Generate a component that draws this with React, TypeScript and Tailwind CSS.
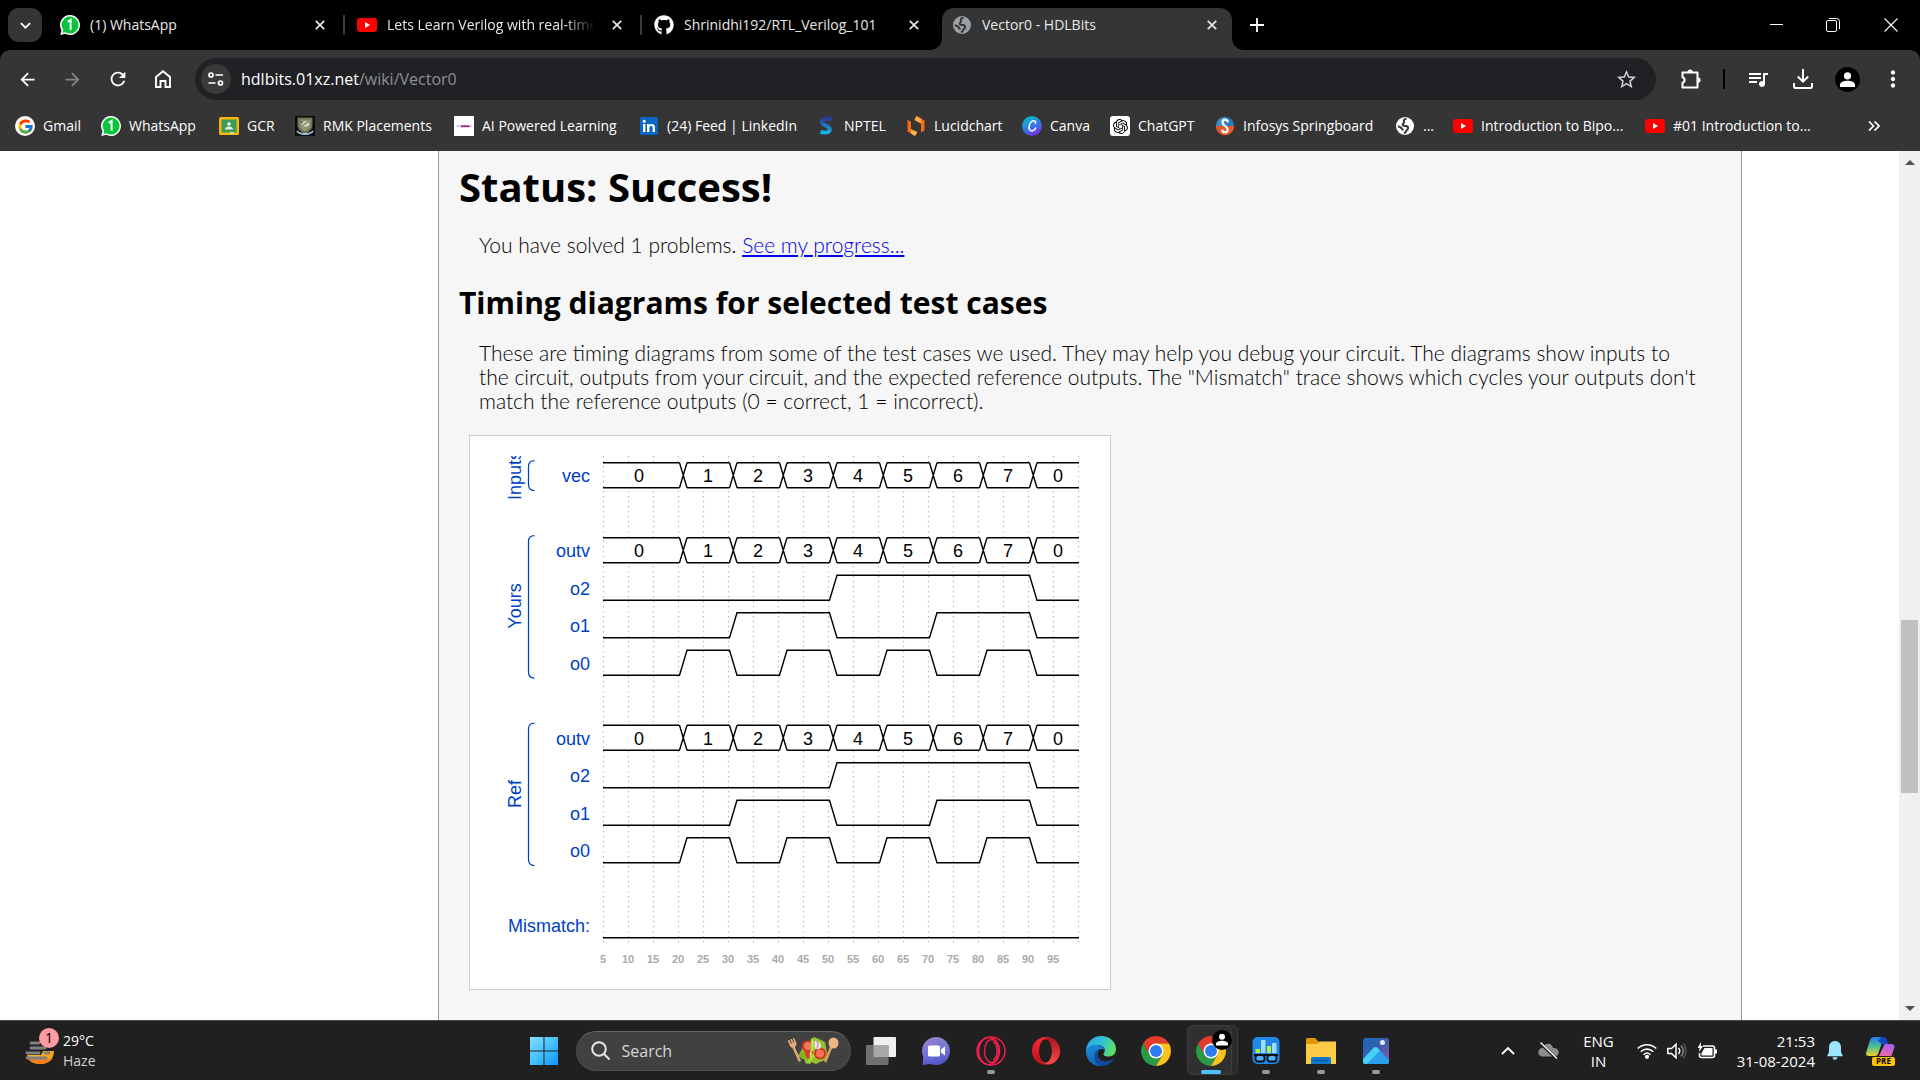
import type { ReactNode } from "react";
import { FcGoogle } from "react-icons/fc";
import { FaGithub } from "react-icons/fa";
import { SiOpenai } from "react-icons/si";
import { MdArrowBack, MdArrowForward, MdRefresh, MdStarBorder, MdQueueMusic, MdMoreVert } from "react-icons/md";

/* ---------- small logos ---------- */

function WhatsAppIcon() {
  return (
    <svg viewBox="0 0 20 20" className="size-5 shrink-0" aria-hidden="true">
      <path d="M10 0a10 10 0 1 1-4.800 18.800L.3 20l1.200-4.800A10 10 0 0 1 10 0z" fill="#fff" />
      <path d="M10 1.500a8.500 8.500 0 1 1-4.500 15.700l-3 .8.8-3A8.500 8.500 0 0 1 10 1.500z" fill="#09c43c" />
      <path d="M7.800 6.900 10.600 5v9.800" fill="none" stroke="#fff" strokeWidth="2" />
    </svg>
  );
}

function YouTubeIcon() {
  return (
    <svg viewBox="0 0 20 20" className="size-5 shrink-0" aria-hidden="true">
      <rect y="3" width="20" height="14" rx="3" fill="#f00" />
      <path d="M8 7v6l5-3z" fill="#fff" />
    </svg>
  );
}

function GlobeIcon({ tone }: { tone: string }) {
  return (
    <svg viewBox="0 0 20 20" className="size-5 shrink-0" aria-hidden="true">
      <circle cx="10" cy="10" r="9" fill={tone} />
      <path
        d="M11.500 2.800C9 3.200 8.300 4.600 9 6c.5 1-1.300 1.200-1.300 2.500 0 1.500 1.800 1.300 3.300 1.500 2 .3 2.500 1.500 1.800 3-.5 1-1.500 1-1.800 2.300-.2 1-.8 1.700-2 2M2.800 10.500c1.200-.3 2.200.2 3.200 1.200.9.9 2 1.300 1.700 3"
        fill="none"
        stroke="#353535"
        strokeWidth="2"
      />
    </svg>
  );
}

function ClassroomIcon() {
  return (
    <svg viewBox="0 0 20 20" className="size-5 shrink-0" aria-hidden="true">
      <rect y="1" width="20" height="18" rx="1.500" fill="#f4b60a" />
      <rect x="2.500" y="3.500" width="15" height="13" fill="#3f9a54" />
      <circle cx="10" cy="8" r="1.800" fill="#fff" />
      <path d="M6 13.500c0-2 1.700-3 4-3s4 1 4 3z" fill="#dcefe0" />
      <path d="M11 16.500h4v1.200h-4z" fill="#fff" />
    </svg>
  );
}

function CrestIcon() {
  return (
    <svg viewBox="0 0 20 20" className="size-5 shrink-0" aria-hidden="true">
      <rect width="20" height="20" fill="#0b0b0b" />
      <path d="M2.500 1.500h15v8c0 4-4 6.500-7.500 8.500-3.500-2-7.500-4.500-7.500-8.500z" fill="#6f7351" />
      <path d="M4.500 3.500h11v6c0 2.700-3 4.500-5.500 6-2.500-1.500-5.500-3.300-5.500-6z" fill="#8f9170" />
      <ellipse cx="10.500" cy="8" rx="3.800" ry="2.800" fill="#d6d6c4" />
      <path d="M7.500 9.500 13 6M5 5l3 2" stroke="#4c5148" />
      <path d="M2 15c3 4 13 4 16 0" stroke="#9cc4dd" strokeWidth="1.800" fill="none" />
    </svg>
  );
}

function PageTileIcon() {
  return (
    <svg viewBox="0 0 20 20" className="size-5 shrink-0" aria-hidden="true">
      <rect width="20" height="20" fill="#fff" />
      <path d="M2.500 10h4" stroke="#b9a6c4" strokeWidth="1.200" />
      <path d="M7 10.300h8.500" stroke="#a3207b" strokeWidth="1.600" />
      <path d="M8 9v2.500M11 9v2.200M14 9v2.200M17 9l-.5 1.500" stroke="#7b2a7d" strokeWidth=".8" />
    </svg>
  );
}

function LinkedInIcon() {
  return (
    <svg viewBox="0 0 20 20" className="size-5 shrink-0" aria-hidden="true">
      <rect x="1" y="1" width="18" height="18" rx="1.500" fill="#0a66c2" />
      <path d="M4 8h2.400v8H4zM8 8h2.300v1.200C11.600 7.200 16 7.300 16 11.300V16h-2.400v-4.300c0-2.400-3.200-2.200-3.200 0V16H8z" fill="#fff" />
      <circle cx="5.200" cy="5.200" r="1.500" fill="#fff" />
    </svg>
  );
}

function SwayamIcon() {
  return (
    <svg viewBox="0 0 20 20" className="size-5 shrink-0" aria-hidden="true">
      <defs>
        <linearGradient id="swayam" x1="0" y1="0" x2="0" y2="1">
          <stop offset="0" stopColor="#2d3a98" />
          <stop offset="1" stopColor="#12b5ec" />
        </linearGradient>
      </defs>
      <path d="M15.500 3.500C12 1.800 6.500 2.500 6 6c-.4 3.300 8 3.500 7.700 7.500-.3 3-5 4-9.200 2.200" fill="none" stroke="url(#swayam)" strokeWidth="4" />
    </svg>
  );
}

function LucidIcon() {
  return (
    <svg viewBox="0 0 20 20" className="size-5 shrink-0" aria-hidden="true">
      <path d="M1.500 4 5 5.800v7.400l6 3.300L9 20l-7.500-4.500z" fill="#f96b13" />
      <path d="M5 13.200 11.500 16 9 20l-4-2.500z" fill="#ffb04a" />
      <path d="m10.500 0 8 4.500v10L15 16.500v-9L8.500 4z" fill="#f96b13" />
      <path d="m10.500 0 4.500 2.600v4.900L8.500 4z" fill="#ffa940" />
    </svg>
  );
}

function CanvaIcon() {
  return (
    <svg viewBox="0 0 20 20" className="size-5 shrink-0" aria-hidden="true">
      <defs>
        <linearGradient id="canva" x1=".2" y1="0" x2=".7" y2="1">
          <stop offset="0" stopColor="#00c4cc" />
          <stop offset=".5" stopColor="#2f7fe0" />
          <stop offset="1" stopColor="#7d2ae8" />
        </linearGradient>
      </defs>
      <circle cx="10" cy="10" r="10" fill="url(#canva)" />
      <path d="M13.300 7.500C14.300 4.600 11.500 4 9.500 5.500c-2.800 2.200-3.700 8.500-.4 9.300 1.800.4 3.600-.9 4.600-2.800" fill="none" stroke="#fff" strokeWidth="1.500" strokeLinecap="round" />
    </svg>
  );
}

function ChatGptIcon() {
  return (
    <span className="flex size-5 shrink-0 items-center justify-center rounded-[3px] bg-white text-black">
      <SiOpenai size={15} />
    </span>
  );
}

function InfosysIcon() {
  return (
    <svg viewBox="0 0 20 20" className="size-5 shrink-0" aria-hidden="true">
      <path d="M10 .8A9.200 9.200 0 0 0 .8 10H10z" fill="#3b8fd0" />
      <path d="M10 .8A9.200 9.200 0 0 1 19.200 10H10z" fill="#2a7cc0" />
      <path d="M.8 10A9.200 9.200 0 0 0 10 19.200V10z" fill="#e4572e" />
      <path d="M19.200 10A9.200 9.200 0 0 1 10 19.200V10z" fill="#f0592b" />
      <path d="M12.800 6.500c0-4-5.300-3.500-5.300-.3 0 3.800 5.300 3.500 5.300 7.500 0 3.300-5.500 3.500-5.500-.3" fill="none" stroke="#fff" strokeWidth="2.200" />
    </svg>
  );
}

function ChromeLogo() {
  return (
    <svg viewBox="2 2 44 44" className="size-[30px]" aria-hidden="true">
      <path d="M24 13H43.050A22 22 0 0 0 4.950 13L14.470 29.500 24 24z" fill="#e33b2e" />
      <path d="M14.470 29.500 4.950 13A22 22 0 0 0 24 46L33.530 29.500 24 24z" fill="#2a9a48" />
      <path d="M33.530 29.500 24 46A22 22 0 0 0 43.050 13H24v11z" fill="#fcc21b" />
      <circle cx="24" cy="24" r="11" fill="#fff" />
      <circle cx="24" cy="24" r="8.800" fill="#2f7cf0" />
    </svg>
  );
}

/* ---------- browser chrome ---------- */

function CloseGlyph() {
  return (
    <svg viewBox="0 0 10 10" className="size-[10px]" aria-hidden="true">
      <path d="M.8.8l8.400 8.400M9.200.8.800 9.200" stroke="#e8e8e8" strokeWidth="1.700" />
    </svg>
  );
}

function Tab({ icon, title, active = false, fade = false }: { icon: ReactNode; title: string; active?: boolean; fade?: boolean }) {
  const shape = active
    ? "relative mx-[5px] mt-2 flex w-[290px] items-center rounded-t-xl bg-[#353535] pl-[10px] pr-[10px] pb-2"
    : "flex w-[297px] items-center border-l border-transparent pl-[13px] pr-[13px]";
  return (
    <div role="tab" aria-selected={active} className={shape}>
      {active && (
        <>
          <svg viewBox="0 0 12 12" className="absolute bottom-0 -left-3 size-3" aria-hidden="true">
            <path d="M12 0v12H0A12 12 0 0 0 12 0z" fill="#353535" />
          </svg>
          <svg viewBox="0 0 12 12" className="absolute -right-3 bottom-0 size-3" aria-hidden="true">
            <path d="M0 0v12h12A12 12 0 0 1 0 0z" fill="#353535" />
          </svg>
        </>
      )}
      {icon}
      <span
        className={
          fade
            ? "ml-[10px] min-w-0 flex-1 overflow-hidden whitespace-nowrap mask-r-from-85% mr-3"
            : "ml-[10px] min-w-0 flex-1 overflow-hidden whitespace-nowrap"
        }
      >
        {title}
      </span>
      <button type="button" aria-label={"Close " + title} className="flex size-5 items-center justify-center">
        <CloseGlyph />
      </button>
    </div>
  );
}

function TabStrip() {
  return (
    <header className="flex h-[50px] shrink-0 bg-black text-sm text-[#e8e8e8]">
      <button type="button" aria-label="Search tabs" className="my-2 ml-2 flex h-[34px] w-[34px] items-center justify-center rounded-[11px] bg-[#353535]">
        <svg viewBox="0 0 10 6" className="h-[7px] w-[11px]" aria-hidden="true">
          <path d="M.8.8 5 5l4.200-4.200" fill="none" stroke="#fff" strokeWidth="1.700" />
        </svg>
      </button>
      <div role="tablist" className="ml-1 flex">
        <Tab icon={<WhatsAppIcon />} title="(1) WhatsApp" />
        <div className="flex">
          <span className="-mr-[2px] my-auto h-5 w-[2px] bg-[#3c3c3c]" />
          <Tab icon={<YouTubeIcon />} title="Lets Learn Verilog with real-time Practice" fade />
        </div>
        <div className="flex">
          <span className="-mr-[2px] my-auto h-5 w-[2px] bg-[#3c3c3c]" />
          <Tab icon={<FaGithub size={20} className="shrink-0 text-white" />} title="Shrinidhi192/RTL_Verilog_101" />
        </div>
        <Tab icon={<GlobeIcon tone="#9aa0a6" />} title="Vector0 - HDLBits" active />
      </div>
      <button type="button" aria-label="New tab" className="ml-[6px] flex w-7 items-center justify-center">
        <svg viewBox="0 0 14 14" className="size-[14px]" aria-hidden="true">
          <path d="M7 0v14M0 7h14" stroke="#fff" strokeWidth="1.800" />
        </svg>
      </button>
      <div className="ml-auto flex">
        <button type="button" aria-label="Minimize" className="flex w-14 items-center justify-center">
          <svg viewBox="0 0 14 14" className="size-[14px]" aria-hidden="true">
            <path d="M0 6.500h13" stroke="#fff" />
          </svg>
        </button>
        <button type="button" aria-label="Restore" className="flex w-14 items-center justify-center">
          <svg viewBox="0 0 14 14" className="size-[14px]" fill="none" stroke="#fff" aria-hidden="true">
            <rect x=".5" y="2.500" width="10" height="11" rx="1.500" />
            <path d="M3 .5h7.500a3 3 0 0 1 3 3V11" />
          </svg>
        </button>
        <button type="button" aria-label="Close" className="flex w-[59px] items-center justify-center">
          <svg viewBox="0 0 14 14" className="size-[14px]" aria-hidden="true">
            <path d="M.5.5l13 13M13.500.5l-13 13" stroke="#fff" strokeWidth="1.100" />
          </svg>
        </button>
      </div>
    </header>
  );
}

function ToolButton({ label, children, className = "" }: { label: string; children: ReactNode; className?: string }) {
  return (
    <button type="button" aria-label={label} className={"flex h-10 w-[45px] items-center justify-center " + className}>
      {children}
    </button>
  );
}

function Toolbar() {
  return (
    <div className="bg-black">
      <nav className="flex h-[58px] items-center rounded-t-[10px] bg-[#353535] pl-[5px] pr-[5px] text-white">
        <ToolButton label="Back">
          <MdArrowBack size={21} />
        </ToolButton>
        <ToolButton label="Forward" className="text-[#868686]">
          <MdArrowForward size={21} />
        </ToolButton>
        <ToolButton label="Reload">
          <MdRefresh size={22} />
        </ToolButton>
        <ToolButton label="Home">
          <svg viewBox="0 0 16 18" className="h-[18px] w-4" fill="none" stroke="currentColor" strokeWidth="1.900" aria-hidden="true">
            <path d="M1 7 8 1.300 15 7v10h-4.500v-6h-5v6H1z" />
          </svg>
        </ToolButton>
        <div className="ml-[10px] flex h-[42px] flex-1 items-center rounded-full bg-[#202124] pl-[6px] pr-[18px]">
          <button type="button" aria-label="View site information" className="flex size-[30px] items-center justify-center rounded-full bg-[#3a3a3a]">
            <svg viewBox="0 0 16 14" className="h-[14px] w-4" fill="none" stroke="#fff" strokeWidth="1.700" aria-hidden="true">
              <circle cx="3" cy="3" r="2" />
              <path d="M7.500 3H15M.5 11h7" />
              <circle cx="12.500" cy="11" r="2" />
            </svg>
          </button>
          <button type="button" aria-label="Edit address" className="ml-[10px] flex-1 text-left text-base">
            hdlbits.01xz.net<span className="text-[#8d8f92]">/wiki/Vector0</span>
          </button>
          <button type="button" aria-label="Bookmark this tab">
            <MdStarBorder size={23} className="text-[#cfcfcf]" />
          </button>
        </div>
        <ToolButton label="Extensions" className="ml-3">
          <svg viewBox="0 0 21 21" className="size-[21px]" fill="none" stroke="currentColor" strokeWidth="2" strokeLinejoin="round" aria-hidden="true">
            <path d="M2.500 3.500h15v15h-15v-4.700c2.800-.7 2.800-4.900 0-5.600z" />
            <path d="M8.500 3a1.600 1.600 0 0 1 3.200 0M18 9.400a1.600 1.600 0 0 1 0 3.200" />
          </svg>
        </ToolButton>
        <span className="mx-[10px] h-5 w-[2px] bg-black" />
        <ToolButton label="Media controls">
          <MdQueueMusic size={24} />
        </ToolButton>
        <ToolButton label="Downloads">
          <svg viewBox="0 0 20 20" className="size-5" fill="none" stroke="currentColor" strokeWidth="2" aria-hidden="true">
            <path d="M10 0v12.500M4.800 7.500l5.200 5.200 5.200-5.200M1 14v3.200q0 1.800 1.800 1.800h14.400q1.800 0 1.800-1.800V14" />
          </svg>
        </ToolButton>
        <ToolButton label="Profile">
          <svg viewBox="0 0 25 25" className="size-[25px]" aria-hidden="true">
            <circle cx="12.500" cy="12.500" r="12.500" />
            <circle cx="12.500" cy="8.800" r="3.600" fill="#fff" />
            <path d="M5 20v-2.300c0-2.700 4-4 7.500-4s7.500 1.300 7.500 4V20z" fill="#fff" />
          </svg>
        </ToolButton>
        <ToolButton label="Menu">
          <MdMoreVert size={26} />
        </ToolButton>
      </nav>
    </div>
  );
}

const bookmarks: { label: string; icon: ReactNode; width: string }[] = [
  { label: "Gmail", icon: <span className="flex size-5 shrink-0 items-center justify-center rounded-full bg-white"><FcGoogle size={17} /></span>, width: "w-[86px]" },
  { label: "WhatsApp", icon: <WhatsAppIcon />, width: "w-[118px]" },
  { label: "GCR", icon: <ClassroomIcon />, width: "w-[76px]" },
  { label: "RMK Placements", icon: <CrestIcon />, width: "w-[159px]" },
  { label: "AI Powered Learning", icon: <PageTileIcon />, width: "w-[185px]" },
  { label: "(24) Feed | LinkedIn", icon: <LinkedInIcon />, width: "w-[177px]" },
  { label: "NPTEL", icon: <SwayamIcon />, width: "w-[90px]" },
  { label: "Lucidchart", icon: <LucidIcon />, width: "w-[116px]" },
  { label: "Canva", icon: <CanvaIcon />, width: "w-[88px]" },
  { label: "ChatGPT", icon: <ChatGptIcon />, width: "w-[105px]" },
  { label: "Infosys Springboard", icon: <InfosysIcon />, width: "w-[180px]" },
  { label: "...", icon: <GlobeIcon tone="#fff" />, width: "w-[58px]" },
  { label: "Introduction to Bipo...", icon: <YouTubeIcon />, width: "w-[192px]" },
  { label: "#01 Introduction to...", icon: <YouTubeIcon />, width: "w-[180px]" },
];

function BookmarkBar() {
  return (
    <div className="flex h-[43px] shrink-0 items-center bg-[#353535] pb-[7px] pl-[15px] pr-9 text-sm text-white">
      {bookmarks.map((b) => (
        <a key={b.label} href="#" className={"flex shrink-0 items-center gap-2 whitespace-nowrap " + b.width}>
          {b.icon}
          {b.label}
        </a>
      ))}
      <button type="button" aria-label="More bookmarks" className="ml-auto p-1">
        <svg viewBox="0 0 12 10" className="h-[10px] w-3" fill="none" stroke="#fff" strokeWidth="1.700" aria-hidden="true">
          <path d="M1 .5 5.500 5 1 9.500M6.500.5 11 5 6.500 9.500" />
        </svg>
      </button>
    </div>
  );
}

/* ---------- timing diagram ---------- */

const LEFT = 113;
const RIGHT = 589;
const rowTop = (row: number) => 6.5 + 37.5 * row;
const edge = (k: number) => 189.5 + 50 * k;
const busValues = ["0", "1", "2", "3", "4", "5", "6", "7", "0"];

function Bus({ row, name }: { row: number; name: string }) {
  const top = rowTop(row) + 0.2;
  const bottom = top + 25;
  let d = "";
  busValues.forEach((_, i) => {
    const from = i === 0 ? LEFT : edge(i - 1) + 7.5;
    const to = i === busValues.length - 1 ? RIGHT : edge(i);
    d += `M${from} ${top}H${to}M${from} ${bottom}H${to}`;
    if (i < busValues.length - 1) d += `M${to} ${top}L${to + 7.5} ${bottom}M${to} ${bottom}L${to + 7.5} ${top}`;
  });
  return (
    <g>
      <rect x={LEFT + 1} y={top} width={RIGHT - LEFT - 2} height={25} fill="#fff" />
      <path d={d} fill="none" stroke="#000" strokeWidth="1.400" />
      <SignalLabel row={row} name={name} />
      {busValues.map((v, i) => (
        <text key={i} x={i === 0 ? 149 : 168 + 50 * i} y={rowTop(row) + 19.5} textAnchor="middle" fontSize="18">
          {v}
        </text>
      ))}
    </g>
  );
}

function SignalLabel({ row, name }: { row: number; name: string }) {
  return (
    <text x="100" y={rowTop(row) + 19.5} textAnchor="end" fontSize="18" fill="#0041c4">
      {name}
    </text>
  );
}

function Wave({ row, name, bit }: { row: number; name: string; bit: number }) {
  const top = rowTop(row) + 0.2;
  const level = (v: string) => ((Number(v) >> bit) & 1 ? top : top + 25);
  let d = `M${LEFT} ${level("0")}`;
  busValues.slice(1).forEach((v, i) => {
    const before = level(busValues[i]);
    const after = level(v);
    if (before !== after) d += `H${edge(i)}L${edge(i) + 7.5} ${after}`;
  });
  d += `H${RIGHT}`;
  return (
    <g>
      <path d={d} fill="none" stroke="#000" strokeWidth="1.400" />
      <SignalLabel row={row} name={name} />
    </g>
  );
}

function Group({ name, from, to, mid }: { name: string; from: number; to: number; mid: number }) {
  return (
    <g>
      <path d={`M44.500 ${from}q-6 0-6 6V${to - 6}q0 6 6 6`} fill="none" stroke="#0041c4" strokeWidth="1.250" />
      <text transform={`translate(31 ${mid}) rotate(270)`} textAnchor="middle" fontSize="18" fill="#0041c4">
        {name}
      </text>
    </g>
  );
}

function TimingDiagram() {
  const grid = Array.from({ length: 20 }, (_, i) => 113.5 + 25 * i);
  return (
    <svg viewBox="0 0 600 513" className="block h-[513px] w-[600px] overflow-hidden font-['Liberation_Sans',Arial,sans-serif]" role="img" aria-label="Timing diagram">
      {grid.map((x) => (
        <path key={x} d={`M${x} 0V487`} stroke="#b4b4b4" strokeWidth="1.250" strokeDasharray="1.250 3.750" />
      ))}
      <Group name="Inputs" from={4.5} to={34.5} mid={19.5} />
      <Group name="Yours" from={79.5} to={222} mid={150} />
      <Group name="Ref" from={267} to={409.5} mid={338} />
      <Bus row={0} name="vec" />
      {[2, 7].map((row) => (
        <g key={row}>
          <Bus row={row} name="outv" />
          <Wave row={row + 1} name="o2" bit={2} />
          <Wave row={row + 2} name="o1" bit={1} />
          <Wave row={row + 3} name="o0" bit={0} />
        </g>
      ))}
      <Wave row={12} name="Mismatch:" bit={3} />
      {grid.slice(0, 19).map((x, i) => (
        <text key={x} x={x - 0.5} y="507" textAnchor="middle" fontSize="11" fontWeight="bold" fill="#aaa">
          {5 * (i + 1)}
        </text>
      ))}
    </svg>
  );
}

/* ---------- page ---------- */

function Page() {
  return (
    <div className="flex min-h-0 flex-1 overflow-hidden bg-white text-black">
      <div className="w-[438px] shrink-0" />
      <main className="min-w-0 flex-1 border-x border-[#999] bg-[#f6f6f6] px-5 font-['Open_Sans',sans-serif]">
        <h1 className="mt-2 text-[40px] leading-[56px] font-bold">Status: Success!</h1>
        <p className="mt-[18px] ml-5 font-['Lato',sans-serif] text-[21px] leading-6 font-light">
          You have solved 1 problems.{" "}
          <a href="#" className="text-[#0000ee] underline">
            See my progress...
          </a>
        </p>
        <h2 className="mt-[26px] text-[30px] leading-[40px] font-bold">Timing diagrams for selected test cases</h2>
        <p className="mt-[18px] ml-5 font-['Lato',sans-serif] text-[21px] leading-6 font-light whitespace-nowrap">
          These are timing diagrams from some of the test cases we used. They may help you debug your circuit. The diagrams show inputs to
          <br />
          the circuit, outputs from your circuit, and the expected reference outputs. The "Mismatch" trace shows which cycles your outputs don't
          <br />
          match the reference outputs (0 = correct, 1 = incorrect).
        </p>
        <div className="mt-[22px] ml-[10px] w-fit border border-[#ccc] bg-white p-5">
          <TimingDiagram />
        </div>
      </main>
      <div className="w-[157px] shrink-0" />
      <div className="flex w-[21px] shrink-0 flex-col items-center bg-[#f0f0f0] py-[9px]">
        <svg viewBox="0 0 10 5" className="h-[5px] w-[10px]" aria-hidden="true">
          <path d="M0 5 5 0l5 5z" fill="#505050" />
        </svg>
        <div className="flex w-[17px] flex-1 flex-col">
          <div className="flex-[454]" />
          <div className="flex-[173] bg-[#c1c1c1]" />
          <div className="flex-[213]" />
        </div>
        <svg viewBox="0 0 10 5" className="h-[5px] w-[10px]" aria-hidden="true">
          <path d="M0 0l5 5 5-5z" fill="#505050" />
        </svg>
      </div>
    </div>
  );
}

/* ---------- taskbar ---------- */

function TaskButton({ label, children, state = "none" }: { label: string; children: ReactNode; state?: "none" | "open" | "active" }) {
  return (
    <button type="button" aria-label={label} className="relative flex h-[59px] w-[55px] items-center justify-center">
      {state === "active" && (
        <>
          <span className="absolute top-1 left-2 h-[50px] w-[46px] rounded-md border border-[#3a3a3a] bg-[#2a2a2a]" />
          <span className="absolute top-1 left-[3px] h-[50px] w-[45px] rounded-md border border-[#3f3f3f] bg-[#303030]" />
        </>
      )}
      <span className="relative">{children}</span>
      {state === "open" && <span className="absolute bottom-[6px] h-1 w-2 rounded-full bg-[#9a9a9a]" />}
      {state === "active" && <span className="absolute bottom-[6px] h-1 w-5 rounded-full bg-[#4cc2ff]" />}
    </button>
  );
}

function SaladArt() {
  return (
    <svg viewBox="0 0 52 28" className="h-7 w-[52px]" aria-hidden="true">
      <path d="M6 9l6.500 14.500" stroke="#e0a56b" strokeWidth="2.600" strokeLinecap="round" />
      <path d="M.8 3.500 3 9c1 2 4 2 5.500.5S9.700 6 8.500 4L7 1z" fill="#e6ad76" />
      <path d="M2.500 2l2 4.500M5 1l1.800 4.500" stroke="#3a3a3a" strokeWidth="1" />
      <path d="M45 8l-6.500 16" stroke="#dc9f63" strokeWidth="2.600" strokeLinecap="round" />
      <ellipse cx="46.500" cy="6" rx="5" ry="5.500" fill="#ebb681" />
      <path d="M14 14l3-7 7-3 3-4 5 2 6 3 1 5 1 6-2 7-5 2-4 2-5-2-5 2-2-5-6-3z" fill="#8fc22f" />
      <circle cx="21" cy="9.500" r="6" fill="#d8321f" />
      <circle cx="21" cy="9" r="4" fill="#f2755a" />
      <circle cx="33" cy="16.500" r="6" fill="#d8321f" />
      <circle cx="33" cy="16.500" r="4" fill="#f2755a" />
      <circle cx="22" cy="17.500" r="4.500" fill="#e23a26" />
      <path d="M28 4c3.500 0 6 2.500 6 5s-2 4-5 3-4-7-1-8z" fill="#f1e3ec" />
      <path d="M29.500 4.500c2 2 2 5 0 7" stroke="#b46ba0" fill="none" />
      <path d="M24 1l3 1 1 9-4 4 4 4-5 8-3-1 3-7z" fill="#a5d238" />
      <path d="M11 18l6-3 3 6-5 1z" fill="#7fb52c" />
      <path d="M25 3l1 8-3 6 2 4" stroke="#d6ef86" strokeWidth="1" fill="none" />
    </svg>
  );
}

function Taskbar() {
  return (
    <footer className="grid h-[60px] shrink-0 grid-cols-[1fr_auto_1fr] border-t border-[#4a4a4a] bg-[#202020] text-[15px] text-white">
      <button type="button" className="flex items-center gap-2 pl-[25px] text-left text-sm">
        <span className="relative">
          <svg viewBox="0 0 30 30" className="size-[30px]" aria-hidden="true">
            <path d="M2 19h14l2-4h11C29 23 23 28 15.500 28S3 24.500 2 19z" fill="#f8a91f" />
            <path d="M3 22.500h24.500C25 26 21 28 15.500 28S5 26.500 3 22.500z" fill="#f0831a" />
            <path d="M6 7h8M6 12h14M2 17h12M20 17h4M2 22h19" stroke="#808080" strokeWidth="2.800" strokeLinecap="round" />
          </svg>
          <span className="absolute -top-2 left-[14px] flex size-5 items-center justify-center rounded-full bg-[#ff99a4] text-black">1</span>
        </span>
        <span className="flex flex-col leading-5">
          <span>29°C</span>
          <span className="text-[#d0d0d0]">Haze</span>
        </span>
      </button>

      <div className="flex items-center">
        <TaskButton label="Start">
          <svg viewBox="0 0 30 30" className="size-[30px]" aria-hidden="true">
            <defs>
              <linearGradient id="start" x1="0" y1="0" x2="30" y2="30" gradientUnits="userSpaceOnUse">
                <stop offset="0" stopColor="#8be0ff" />
                <stop offset=".5" stopColor="#45c1ff" />
                <stop offset="1" stopColor="#0a93fb" />
              </linearGradient>
            </defs>
            <path d="M1 1h13.500v13.500H1zM15.500 1H29v13.500H15.500zM1 15.500h13.500V29H1zM15.500 15.500H29V29H15.500z" fill="url(#start)" />
          </svg>
        </TaskButton>
        <label className="mr-[3px] ml-1 flex h-10 w-[275px] items-center rounded-full border border-[#4d4d4d] border-t-[#666] bg-[#414141] pr-[11px] pl-[14px]">
          <svg viewBox="0 0 19 19" className="size-[19px] shrink-0" fill="none" stroke="#e6e6e6" strokeWidth="2" strokeLinecap="round" aria-hidden="true">
            <circle cx="8" cy="8" r="6.800" />
            <path d="m13 13 5 5" />
          </svg>
          <input aria-label="Search" placeholder="Search" className="ml-3 min-w-0 flex-1 bg-transparent text-base text-[#d6d6d6] placeholder:text-[#d6d6d6]" />
          <SaladArt />
        </label>
        <TaskButton label="Task view">
          <svg viewBox="0 0 30 30" className="size-[30px]" aria-hidden="true">
            <rect x="7.500" y="1" width="22.500" height="20" rx="1" fill="#f0f0f0" />
            <rect y="9" width="22.500" height="20" rx="1" fill="#707070" />
            <path d="M7.500 9h15v12h-15z" fill="#a8a8a8" />
          </svg>
        </TaskButton>
        <TaskButton label="Chat">
          <svg viewBox="0 0 30 30" className="size-[30px]" aria-hidden="true">
            <defs>
              <linearGradient id="chat" x1=".3" y1="0" x2=".6" y2="1">
                <stop offset="0" stopColor="#9b80c8" />
                <stop offset=".5" stopColor="#6f78dc" />
                <stop offset="1" stopColor="#5450c8" />
              </linearGradient>
            </defs>
            <path d="M15 1a14 14 0 1 1-5.500 26.900L1.500 29l.8-8A14 14 0 0 1 15 1z" fill="url(#chat)" />
            <rect x="7" y="9.500" width="12" height="11" rx="1.500" fill="#fff" />
            <path d="m20 13.500 4-3v9l-4-3z" fill="#fff" />
          </svg>
        </TaskButton>
        <TaskButton label="Opera GX" state="open">
          <svg viewBox="0 0 30 30" className="size-[30px]" fill="none" stroke="#f0204f" strokeWidth="1.400" aria-hidden="true">
            <circle cx="15" cy="15" r="14" />
            <ellipse cx="13" cy="15" rx="10.500" ry="13.500" />
            <ellipse cx="15.500" cy="15" rx="7" ry="11.500" />
            <path d="M17 6c5.500 3 5.500 15 0 18" />
          </svg>
        </TaskButton>
        <TaskButton label="Opera">
          <svg viewBox="0 0 30 30" className="size-[30px]" aria-hidden="true">
            <defs>
              <linearGradient id="opera" x1="0" y1="0" x2="0" y2="1">
                <stop offset="0" stopColor="#ff2636" />
                <stop offset="1" stopColor="#b8111d" />
              </linearGradient>
              <linearGradient id="operaRight" x1="0" y1="0" x2="0" y2="1">
                <stop offset="0" stopColor="#a81520" />
                <stop offset="1" stopColor="#ff4a4a" />
              </linearGradient>
            </defs>
            <circle cx="15" cy="15" r="14" fill="url(#opera)" />
            <path d="M11 4.500c3-3 8-4 12-1 8 5.500 8 17.500 0 23-4 3-9 2-12-1z" fill="url(#operaRight)" />
            <ellipse cx="14.500" cy="15" rx="6.500" ry="11.500" fill="#202020" />
          </svg>
        </TaskButton>
        <TaskButton label="Edge">
          <svg viewBox="0 0 30 30" className="size-[30px]" aria-hidden="true">
            <defs>
              <linearGradient id="edgeTop" x1="0" y1=".3" x2="1" y2=".6">
                <stop offset="0" stopColor="#2aa6e8" />
                <stop offset=".55" stopColor="#35c5cf" />
                <stop offset="1" stopColor="#62e05a" />
              </linearGradient>
              <linearGradient id="edgeLeft" x1="0" y1="0" x2=".4" y2="1">
                <stop offset="0" stopColor="#1c8fdf" />
                <stop offset="1" stopColor="#1063b8" />
              </linearGradient>
            </defs>
            <path d="M0 14C1 6 7 0 15 0c9 0 15 6 15 13 0 5-3.500 7.500-7.500 7.500-3.500 0-5.500-1.500-5-2.800.6-1 1.300-1.700 1.300-3.700C18.500 9 9 6 0 14z" fill="url(#edgeTop)" />
            <path d="M0 14C3 9 8 8 12 9c4 .8 6.500 3 6.800 5.500-2-2.500-6.500-2-7.300 2-.8 5 3.500 10.500 9.500 10.500-2 2-4 3-7 3C5.500 30-.5 23 0 14z" fill="url(#edgeLeft)" />
            <path d="M12 13.500c-2 4-1 9.500 4 11.300 4 1.300 8 .2 11.500-2.300.6-.4 1 .1.700.6C25.500 27.500 20.500 30 15.500 30 9 29 5.500 19 12 13.500z" fill="#114a94" />
          </svg>
        </TaskButton>
        <TaskButton label="Chrome">
          <ChromeLogo />
        </TaskButton>
        <TaskButton label="Chrome, profile window" state="active">
          <ChromeLogo />
          <svg viewBox="0 0 20 20" className="absolute -top-[6px] left-4 size-5" aria-hidden="true">
            <circle cx="10" cy="10" r="10" />
            <circle cx="10" cy="6.800" r="3" fill="#fff" />
            <path d="M4 15.500v-1.600c0-2.300 3-3.200 6-3.200s6 .9 6 3.200v1.600z" fill="#fff" />
          </svg>
        </TaskButton>
        <TaskButton label="Analytics" state="open">
          <svg viewBox="0 0 30 30" className="size-[30px]" aria-hidden="true">
            <rect x="1.500" y="1" width="27" height="27" rx="5" fill="#1f86ea" />
            <path d="M10 4h4.500v13H10zM21 7h4.500v10H21z" fill="#9bdcff" />
            <path d="M4.500 13H9v4H4.500zM16 10h4v7h-4z" fill="#b8f04a" />
            <path d="M3 19h24" stroke="#111" strokeWidth="2" />
            <rect x="4.500" y="19" width="9" height="6.500" rx="2.500" fill="#4db0ff" stroke="#111" strokeWidth="1.800" />
            <rect x="16.500" y="19" width="9" height="6.500" rx="2.500" fill="#4db0ff" stroke="#111" strokeWidth="1.800" />
          </svg>
        </TaskButton>
        <TaskButton label="File Explorer" state="open">
          <svg viewBox="0 0 30 30" className="size-[30px]" aria-hidden="true">
            <path d="M0 3.500Q0 2 1.500 2H9l3.500 3.500V10H0z" fill="#dc9a08" />
            <path d="M0 8h11l2.500-2.500H30V28H0z" fill="#ffcb45" />
            <path d="M5 28v-5.500Q5 21 6.500 21h17q1.500 0 1.500 1.500V28z" fill="#0f78cc" />
            <path d="M8.500 24.500h13" stroke="#0a4f8f" strokeWidth="1.200" />
          </svg>
        </TaskButton>
        <TaskButton label="Photos" state="open">
          <svg viewBox="0 0 30 30" className="size-[30px]" aria-hidden="true">
            <defs>
              <linearGradient id="photos" x1="0" y1="0" x2="1" y2="1">
                <stop offset="0" stopColor="#1469b8" />
                <stop offset=".5" stopColor="#3f5cae" />
                <stop offset="1" stopColor="#a254a8" />
              </linearGradient>
            </defs>
            <rect x="2" y="2" width="26" height="26" rx="2.500" fill="url(#photos)" />
            <path d="M2 23 12.500 12q2-2 4 0L28 24v1.500Q28 28 25.500 28h-21Q2 28 2 25.500z" fill="#2a9fea" />
            <path d="M2 23 12.500 12q2-2 4 0l2.500 2.500L5.500 28H4.500Q2 28 2 25.500z" fill="#47d2f5" />
            <circle cx="21.500" cy="6.500" r="2.500" fill="#e9eefc" />
          </svg>
        </TaskButton>
      </div>

      <div className="flex items-center justify-end pr-[25px]">
        <button type="button" aria-label="Show hidden icons" className="mr-[23px]">
          <svg viewBox="0 0 14 9" className="h-[9px] w-[14px]" fill="none" stroke="#fff" strokeWidth="1.800" aria-hidden="true">
            <path d="M1 8l6-6 6 6" />
          </svg>
        </button>
        <svg viewBox="0 0 21 18" className="mr-6 h-[18px] w-[21px]" aria-hidden="true">
          <path d="M4.500 14.500a4.200 4.200 0 0 1 0-8.500C7 0 14 1 15 6c7-.5 7.500 8.500 1.500 8.500z" fill="#8c8c8c" />
          <path d="M2 1l17 16" stroke="#202020" strokeWidth="3" />
          <path d="M2.500.5l16.500 16" stroke="#fff" strokeWidth="1.300" />
        </svg>
        <button type="button" className="mr-[23px] flex flex-col items-center leading-5">
          <span>ENG</span>
          <span>IN</span>
        </button>
        <svg viewBox="0 0 20 16" className="mr-[10px] h-4 w-5" fill="none" stroke="#fff" strokeWidth="1.600" aria-hidden="true">
          <path d="M.8 5.500c5-5 13.400-5 18.400 0M3.800 8.700c3.500-3.500 8.900-3.500 12.400 0M6.600 11.700c2-2 4.800-2 6.800 0" />
          <circle cx="10" cy="13.800" r="1.300" fill="#fff" />
        </svg>
        <svg viewBox="0 0 20 18" className="mr-[10px] h-[18px] w-5" fill="none" strokeWidth="1.500" aria-hidden="true">
          <path d="M.8 6.500h3.700L9 2.300v13.400l-4.500-4.200H.8zM11.500 6q2.500 3 0 6" stroke="#fff" />
          <path d="M14 3.500q4.500 5.500 0 11" stroke="#8b8b8b" />
          <path d="M16.500 1.500q5 7.500 0 15" stroke="#555" />
        </svg>
        <svg viewBox="0 0 20 18" className="mr-5 h-[18px] w-5" aria-hidden="true">
          <path d="M6 4h9.500Q17.500 4 17.500 6v7.500q0 2-2 2h-11q-2 0-2-2V11" fill="none" stroke="#fff" strokeWidth="1.500" />
          <path d="M7.500 6h8v7.500h-11V11z" fill="#fff" />
          <path d="M18 7.500h2v4h-2zM4 0 .5 6h2.200L2 10l4-6H3.800z" fill="#fff" />
        </svg>
        <button type="button" className="mr-3 flex flex-col items-end leading-5">
          <span>21:53</span>
          <span>31-08-2024</span>
        </button>
        <svg viewBox="0 0 16 19" className="mr-[23px] h-[19px] w-4" fill="#9be7ff" aria-hidden="true">
          <path d="M8 0c4 0 6 3 6 6.500V11l2 4.300H0L2 11V6.500C2 3 4 0 8 0zM5.500 16.300h5Q10 18.800 8 18.800t-2.500-2.500z" />
        </svg>
        <button type="button" aria-label="Copilot" className="relative">
          <svg viewBox="0 0 29 28" className="h-7 w-[29px]" aria-hidden="true">
            <defs>
              <linearGradient id="pilotA" x1="0" y1="0" x2="0" y2="1">
                <stop offset="0" stopColor="#1f7df0" />
                <stop offset=".5" stopColor="#4cc08f" />
                <stop offset="1" stopColor="#f0d030" />
              </linearGradient>
              <linearGradient id="pilotB" x1=".5" y1="0" x2=".2" y2="1">
                <stop offset="0" stopColor="#a95ff0" />
                <stop offset="1" stopColor="#f06aa0" />
              </linearGradient>
            </defs>
            <path d="M8 0h10l-6 17q-.6 2-3 2H3q-4 0-2.600-4L4 3Q5 0 8 0z" fill="url(#pilotA)" />
            <path d="M15 0h2q3 0 4 3l1.200 4H16l-4-3z" fill="#1646c8" />
            <path d="M18.500 7H25q4.500 0 3.200 4l-2.700 8H13z" fill="url(#pilotB)" />
          </svg>
          <span className="absolute -bottom-[1px] left-[6px] flex h-[9px] w-[23px] items-center justify-center rounded-[2px] bg-[#ffc20a] text-[8px] font-bold text-black">PRE</span>
        </button>
      </div>
    </footer>
  );
}

export default function App() {
  return (
    <div className="flex h-screen flex-col overflow-hidden bg-black font-['Open_Sans','Noto_Sans',sans-serif]">
      <TabStrip />
      <Toolbar />
      <BookmarkBar />
      <Page />
      <Taskbar />
    </div>
  );
}
